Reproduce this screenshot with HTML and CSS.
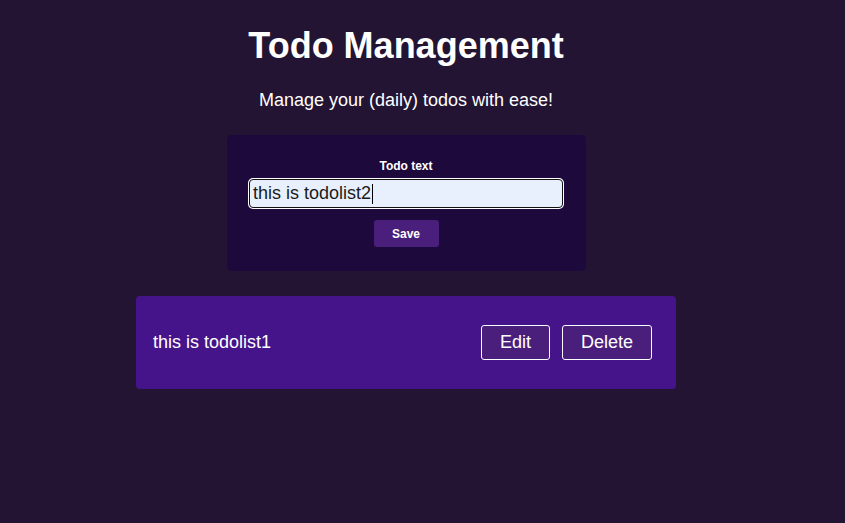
FILE: index.html
```html
<!DOCTYPE html>
<html lang="en">
<head>
<meta charset="utf-8">
<title>Todo Management</title>
<link rel="stylesheet" href="styles.css">
</head>
<body>
<main class="page">
  <h1 class="title">Todo Management</h1>
  <p class="subtitle">Manage your (daily) todos with ease!</p>
  <form class="todo-form">
    <label class="form-label" for="todo-text">Todo text</label>
    <div class="input-box"><span class="input-value">this is todolist2</span><span class="caret"></span></div>
    <button type="button" class="save-btn">Save</button>
  </form>
  <ul class="todo-list">
    <li class="todo-item">
      <span class="todo-text">this is todolist1</span>
      <div class="todo-actions">
        <button type="button" class="action-btn">Edit</button>
        <button type="button" class="action-btn">Delete</button>
      </div>
    </li>
  </ul>
</main>
</body>
</html>
```
FILE: styles.css
```css
html, body {
  margin: 0;
  padding: 0;
  background: #231433;
  font-family: "Liberation Sans", Arial, sans-serif;
  color: #ffffff;
}
.page {
  width: 812px;
  display: flex;
  flex-direction: column;
  align-items: center;
  padding-top: 25px;
}
.title {
  margin: 0;
  font-size: 36px;
  font-weight: 700;
  line-height: 41px;
}
.subtitle {
  margin: 24px 0 0;
  font-size: 18px;
  line-height: 21px;
}
.todo-form {
  margin-top: 24px;
  width: 359px;
  box-sizing: border-box;
  background: #1e093c;
  border-radius: 5px;
  padding: 24px 0 24px;
  display: flex;
  flex-direction: column;
  align-items: center;
}
.form-label {
  font-size: 12px;
  font-weight: 700;
  line-height: 14px;
}
.input-box {
  margin-top: 6px;
  width: 314px;
  height: 29px;
  box-sizing: border-box;
  background: #e8f0fe;
  border: 1px solid #111111;
  border-radius: 4px;
  box-shadow: 0 0 0 1px #ffffff;
  display: flex;
  align-items: center;
  padding-left: 3px;
  color: #1a1a1a;
  font-size: 18px;
}
.caret {
  display: inline-block;
  width: 1px;
  height: 20px;
  background: #000;
  margin-left: 1px;
}
.save-btn {
  margin-top: 12px;
  width: 65px;
  height: 27px;
  border: none;
  border-radius: 3px;
  background: #4a1e7b;
  color: #ffffff;
  font-family: inherit;
  font-size: 12px;
  font-weight: 700;
  padding: 0;
}
.todo-list {
  list-style: none;
  margin: 25px 0 0;
  padding: 0;
}
.todo-item {
  width: 540px;
  height: 93px;
  box-sizing: border-box;
  background: #45148a;
  border-radius: 4px;
  padding: 0 24px 0 17px;
  display: flex;
  align-items: center;
  justify-content: space-between;
}
.todo-text {
  font-size: 18px;
}
.todo-actions {
  display: flex;
  gap: 12px;
}
.action-btn {
  height: 35px;
  box-sizing: border-box;
  border: 1px solid #ffffff;
  border-radius: 3px;
  background: #4a1e7b;
  color: #ffffff;
  font-family: inherit;
  font-size: 18px;
  padding: 0 18px;
}
```
